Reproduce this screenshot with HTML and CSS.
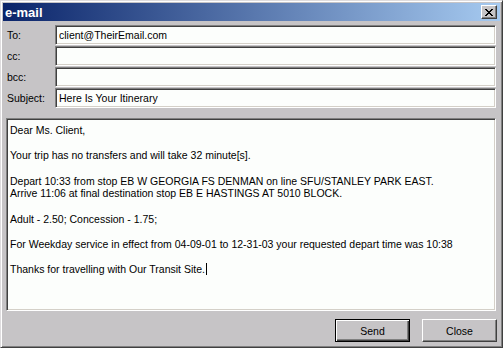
FILE: index.html
```html
<!DOCTYPE html>
<html lang="en">
<head>
  <meta charset="UTF-8">
  <meta name="viewport" content="width=device-width, initial-scale=1.0">
  <title>e-mail</title>
  <link rel="stylesheet" href="styles.css">
</head>
<body>
  <div class="window">
    <div class="titlebar">
      <span class="title">e-mail</span>
      <button class="close-x" aria-label="Close">
        <svg width="8" height="7" viewBox="0 0 8 7" shape-rendering="crispEdges">
          <path d="M0 0h2v1h-2z M1 1h2v1h-2z M2 2h4v1h-4z M3 3h2v1h-2z M2 4h4v1h-4z M1 5h2v1h-2z M0 6h2v1h-2z M6 0h2v1h-2z M5 1h2v1h-2z M5 5h2v1h-2z M6 6h2v1h-2z" fill="#000"/>
        </svg>
      </button>
    </div>

    <div class="content">
      <div class="fields">
        <label class="field-label" for="to">To:</label>
        <input class="field-input" id="to" type="text" value="client@TheirEmail.com">
        <label class="field-label" for="cc">cc:</label>
        <input class="field-input" id="cc" type="text" value="">
        <label class="field-label" for="bcc">bcc:</label>
        <input class="field-input" id="bcc" type="text" value="">
        <label class="field-label" for="subject">Subject:</label>
        <input class="field-input" id="subject" type="text" value="Here Is Your Itinerary">
      </div>

      <div class="message">
        <p>Dear Ms. Client,</p>
        <p>Your trip has no transfers and will take 32 minute[s].</p>
        <p>Depart 10:33 from stop EB W GEORGIA FS DENMAN on line SFU/STANLEY PARK EAST.<br>Arrive 11:06 at final destination stop EB E HASTINGS AT 5010 BLOCK.</p>
        <p>Adult - 2.50; Concession - 1.75;</p>
        <p>For Weekday service in effect from 04-09-01 to 12-31-03 your requested depart time was 10:38</p>
        <p>Thanks for travelling with Our Transit Site.<span class="caret"></span></p>
      </div>

      <div class="actions">
        <button class="btn btn-default">Send</button>
        <button class="btn">Close</button>
      </div>
    </div>
  </div>
</body>
</html>
```

FILE: styles.css
```css
/* Classic dialog */
html, body {
  margin: 0;
}

body {
  font-family: "Liberation Sans", Arial, sans-serif;
  font-size: 10.5px;
  background: #c6c4c6;
}

.window {
  box-sizing: border-box;
  width: 503px;
  height: 348px;
  padding: 2px;
  background: #c6c4c6;
  border: 1px solid;
  border-color: #dedcde #404040 #404040 #dedcde;
  box-shadow: inset 1px 1px #fff, inset -1px -1px #808080;
}

.titlebar {
  height: 18px;
  display: flex;
  align-items: center;
  justify-content: space-between;
  padding: 0 3px 0 2px;
  background: linear-gradient(to right, #0a246a, #a6caf0);
}

.title {
  color: #fff;
  font-weight: bold;
  font-size: 13px;
}

.close-x {
  box-sizing: border-box;
  width: 16px;
  height: 14px;
  padding: 0;
  display: flex;
  align-items: center;
  justify-content: center;
  background: #c6c4c6;
  border: 1px solid;
  border-color: #fff #404040 #404040 #fff;
  box-shadow: inset -1px -1px #808080;
}

.content {
  padding: 4px 4px 0 3px;
}

.fields {
  display: grid;
  grid-template-columns: 49px 1fr;
  row-gap: 1px;
  align-items: center;
}

.field-label {
  padding-left: 1px;
  color: #000;
}

.field-input,
.message {
  box-sizing: border-box;
  border: 1px solid;
  border-color: #808080 #fff #fff #808080;
  box-shadow: inset 1px 1px #404040, inset -1px -1px #d4d0c8;
  background: #fcfefc;
}

.field-input {
  width: 100%;
  height: 20px;
  margin: 0;
  padding: 0 3px;
  font: inherit;
  color: #000;
  outline: none;
}

.message {
  height: 193px;
  margin-top: 10px;
  padding: 5px 3px 3px;
  line-height: 12.65px;
}

.message p {
  margin: 0 0 12.65px;
}

.caret {
  display: inline-block;
  width: 1px;
  height: 12px;
  margin-left: 1px;
  vertical-align: -2px;
  background: #000;
}

.actions {
  display: flex;
  justify-content: flex-end;
  gap: 12px;
  margin: 8px -1px 0 0;
}

.btn {
  box-sizing: border-box;
  width: 75px;
  height: 23px;
  padding: 0;
  font: inherit;
  color: #000;
  background: #c6c4c6;
  border: 1px solid;
  border-color: #fff #404040 #404040 #fff;
  box-shadow: inset -1px -1px #808080;
}

.btn-default {
  border-color: #000;
  box-shadow: inset 1px 1px #fff, inset -1px -1px #404040, inset -2px -2px #808080;
}
```
